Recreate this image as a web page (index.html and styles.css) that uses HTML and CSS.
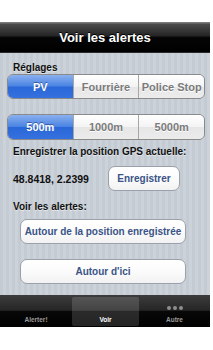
FILE: index.html
```html
<!DOCTYPE html>
<html>
<head>
<meta charset="utf-8">
<link rel="stylesheet" href="styles.css">
</head>
<body>
<div class="screen">
  <div class="status"></div>
  <div class="navbar"><span class="title">Voir les alertes</span></div>
  <div class="content">
    <div class="label first">Réglages</div>
    <div class="seg seg1">
      <div class="segitem on">PV</div>
      <div class="segitem">Fourrière</div>
      <div class="segitem">Police Stop</div>
    </div>
    <div class="seg seg2">
      <div class="segitem on">500m</div>
      <div class="segitem">1000m</div>
      <div class="segitem">5000m</div>
    </div>
    <div class="label gps">Enregistrer la position GPS actuelle:</div>
    <div class="row">
      <span class="coords">48.8418, 2.2399</span>
      <div class="btn small">Enregistrer</div>
    </div>
    <div class="label voir">Voir les alertes:</div>
    <div class="btn wide b1">Autour de la position enregistrée</div>
    <div class="btn wide b2">Autour d'ici</div>
  </div>
  <div class="tabbar">
    <div class="tab"><span class="ticon"></span><span class="tlabel">Alerter!</span></div>
    <div class="tab sel"><span class="ticon"></span><span class="tlabel">Voir</span></div>
    <div class="tab"><span class="ticon dots"><i></i><i></i><i></i></span><span class="tlabel">Autre</span></div>
  </div>
</div>
</body>
</html>
```
FILE: styles.css
```css
html, body { margin: 0; padding: 0; background: #fff; }
body { width: 213px; height: 350px; overflow: hidden; font-family: "Liberation Sans", Arial, sans-serif; }
.screen { width: 210px; display: flex; flex-direction: column; }
.status { height: 22px; background: #fff; }
.navbar {
  height: 31px;
  background: linear-gradient(#8a8a8a 0, #4a4a4a 8%, #262626 45%, #050505 52%, #000 100%);
  border-bottom: 1px solid #2a2a2a;
  box-sizing: border-box;
  display: flex; align-items: center; justify-content: center;
}
.title { color: #fff; font-weight: bold; font-size: 13px; text-shadow: 0 -1px 0 #000; }
.content {
  height: 242px;
  background: repeating-linear-gradient(90deg, #c4cbd3 0 3px, #ccd2d9 3px 6px);
  display: flex; flex-direction: column;
}
.label { font-size: 10px; font-weight: bold; color: #111; line-height: 12px; padding-left: 13px; text-shadow: 0 1px 0 rgba(255,255,255,0.5); }
.label.first { margin-top: 9px; }
.seg {
  margin-left: 7px; width: 198px; display: flex;
  border: 1px solid #8a8a8a; border-radius: 6px; overflow: hidden; box-sizing: border-box;
}
.seg1 { height: 25px; margin-top: 0; }
.seg2 { height: 26px; margin-top: 15px; }
.segitem {
  flex: 1; display: flex; align-items: center; justify-content: center;
  font-size: 11px; font-weight: bold; color: #7b7b7b;
  background: linear-gradient(#ffffff 0, #f3f3f3 50%, #e6e6e6 51%, #ececec 100%);
  border-left: 1px solid #a6a6a6;
  text-shadow: 0 1px 0 #fff;
  white-space: nowrap;
}
.segitem:first-child { border-left: none; }
.segitem.on {
  color: #fff;
  background: linear-gradient(#8ab0ee 0, #4a84e3 48%, #2a67d8 52%, #3571de 100%);
  text-shadow: 0 -1px 0 rgba(0,0,60,0.4);
}
.label.gps { margin-top: 6px; }
.row { margin-top: 8px; display: grid; grid-template-columns: 95px 72px; padding-left: 13px; align-items: center; }
.coords { font-size: 10.5px; font-weight: bold; color: #111; }
.btn {
  background: linear-gradient(#ffffff 0, #fbfbfb 50%, #f2f2f2 100%);
  border: 1px solid #9aa1aa; border-radius: 7px; box-sizing: border-box;
  color: #3a5487; font-weight: bold; font-size: 10px;
  display: flex; align-items: center; justify-content: center;
  height: 25px;
}
.btn.wide { width: 166px; margin-left: 20px; }
.label.voir { margin-top: 10px; }
.b1 { margin-top: 6px; }
.b2 { margin-top: 15px; }
.tabbar {
  height: 32px;
  background: linear-gradient(#3c3c3c 0, #262626 48%, #080808 50%, #000 100%);
  display: grid; grid-template-columns: 72px 67px 71px;
}
.tab { display: flex; flex-direction: column; align-items: center; justify-content: flex-end; padding-bottom: 2px; box-sizing: border-box; margin: 2px 0 1px; border-radius: 2px; }
.tab.sel { background: rgba(255,255,255,0.14); }
.ticon { height: 10px; display: flex; gap: 2px; align-items: center; margin-bottom: 3px; }
.dots i { width: 4px; height: 4px; border-radius: 50%; background: #8e8e8e; display: block; }
.tlabel { font-size: 6.5px; font-weight: bold; color: #9a9a9a; line-height: 8px; }
.tab.sel .tlabel { color: #fff; }
```
